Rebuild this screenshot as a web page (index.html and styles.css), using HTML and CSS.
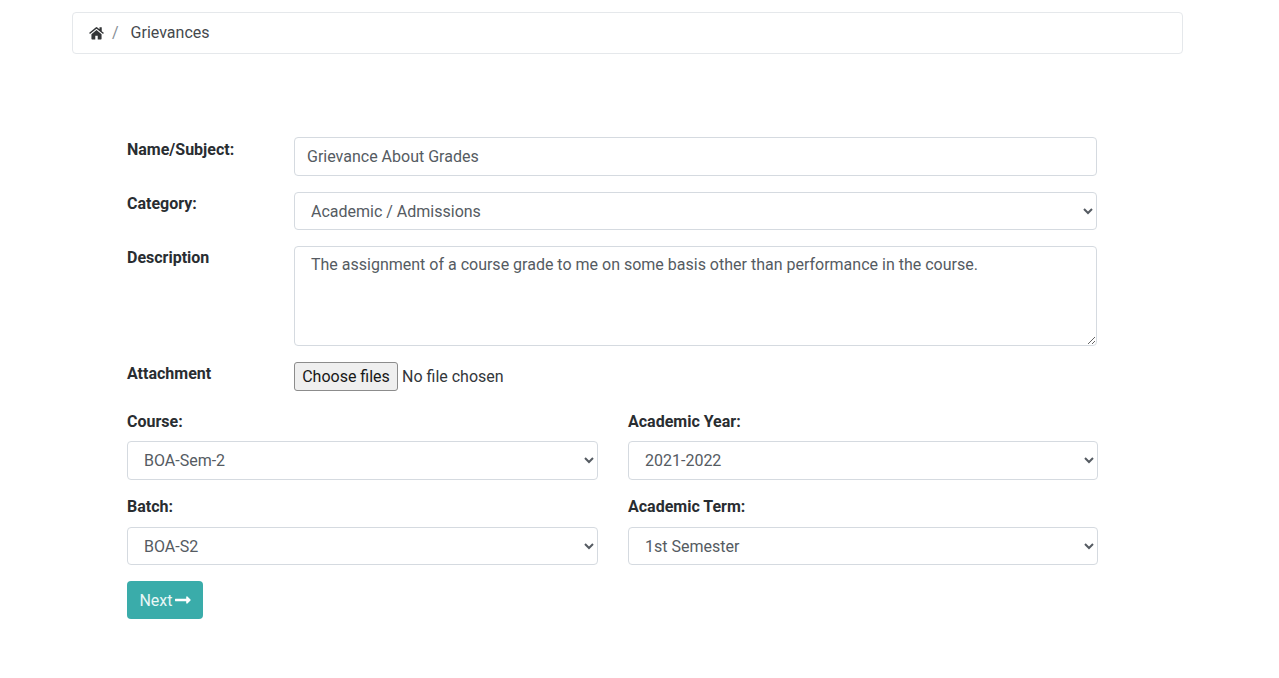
FILE: index.html
```html
<!DOCTYPE html>
<html lang="en">
<head>
<meta charset="utf-8">
<title>Grievances</title>
<link rel="stylesheet" href="styles.css">
</head>
<body>
<nav class="breadcrumb">
  <svg class="home" viewBox="0 0 16 14"><path d="M8 3.900 2.600 8.400v4.700c0 .4.3.7.7.7h3.400V9.900h2.600v3.900h3.400c.4 0 .7-.3.7-.7V8.400z"/><path d="M15.700 6.800 13.600 5V1.200c0-.2-.1-.3-.3-.3h-1.800c-.2 0-.3.1-.3.3V3L8.900 1a1.400 1.400 0 0 0-1.800 0L.3 6.800c-.1.1-.2.3 0 .4l.6.7c.1.1.3.1.4 0L8 2.500l6.700 5.400c.1.1.3.1.4 0l.6-.7c.2-.1.1-.3 0-.4z"/></svg>
  <span class="slash">/</span><span>Grievances</span>
</nav>
<form class="form">
  <div class="row subject"><label class="label">Name/Subject:</label><input class="control tall" type="text" value="Grievance About Grades"></div>
  <div class="row"><label class="label">Category:</label><select class="control"><option>Academic / Admissions</option></select></div>
  <div class="row"><label class="label">Description</label><textarea class="control area">The assignment of a course grade to me on some basis other than performance in the course.</textarea></div>
  <div class="row attachment"><label class="label">Attachment</label><div class="file"><button class="choose" type="button">Choose files</button><span>No file chosen</span></div></div>
  <div class="grid upper">
    <div><label class="label">Course:</label><select class="control tall"><option>BOA-Sem-2</option></select></div>
    <div><label class="label">Academic Year:</label><select class="control tall"><option>2021-2022</option></select></div>
  </div>
  <div class="grid">
    <div><label class="label">Batch:</label><select class="control"><option>BOA-S2</option></select></div>
    <div><label class="label">Academic Term:</label><select class="control"><option>1st Semester</option></select></div>
  </div>
  <button class="next" type="button">Next<svg class="arrow" viewBox="0 0 16 8"><path d="M.4 2.800h10.800V1c0-.7.8-1 1.200-.6l3.100 3c.3.3.3.8 0 1.100l-3.100 3c-.4.400-1.200.1-1.200-.6V5.200H.4C.2 5.200 0 5 0 4.800V3.200c0-.2.2-.4.4-.4z"/></svg></button>
</form>
</body>
</html>
```
FILE: styles.css
```css
* { box-sizing: border-box; }
body { margin: 0; padding: 12px 0 0 72px; font: 16px/24px Roboto, sans-serif; color: #45494d; background: #fff; }
.breadcrumb { display: flex; align-items: center; width: 1111px; height: 42px; padding: 0 16px; border: 1px solid #e5e8eb; border-radius: 4px; }
.home { width: 15px; height: 14px; margin-top: -1px; fill: #343638; }
.slash { margin: 0 12px 0 8px; color: #868e96; }
.form { width: 971px; margin: 83px 0 0 55px; }
.row { display: grid; grid-template-columns: 167px 803px; margin-bottom: 16px; }
.label { display: block; font-weight: 700; color: #292d31; }
.subject .label { padding-top: 1px; }
.control { display: block; width: 100%; height: 38px; margin: 0; padding: 6px 12px; border: 1px solid #d5dae0; border-radius: 4px; background: #fff; color: #555b62; font: 16px/24px Roboto, sans-serif; outline: none; }
.control.tall { height: 39px; }
.control.area { height: 100px; padding: 6px 16px; resize: vertical; }
.attachment { margin-bottom: 19px; }
.file { display: flex; align-items: center; gap: 4px; height: 29px; color: #33373b; }
.choose { height: 29px; width: 104px; padding: 0; border: 1px solid #8c8c8c; border-radius: 3px; background: #efefef; color: #181818; font: 16px Roboto, sans-serif; }
.grid { display: grid; grid-template-columns: 471px 470px; gap: 30px; }
.grid .label { margin-bottom: 8px; }
.upper { margin-bottom: 15px; }
.upper .label { margin-bottom: 7px; }
.next { display: flex; align-items: center; justify-content: center; gap: 2px; width: 76px; height: 38px; margin-top: 16px; padding: 0; border: 0; border-radius: 4px; background: #3aacaa; color: #e9f7f6; font: 16px Roboto, sans-serif; }
.arrow { width: 16px; height: 8px; fill: #fff; }
```
